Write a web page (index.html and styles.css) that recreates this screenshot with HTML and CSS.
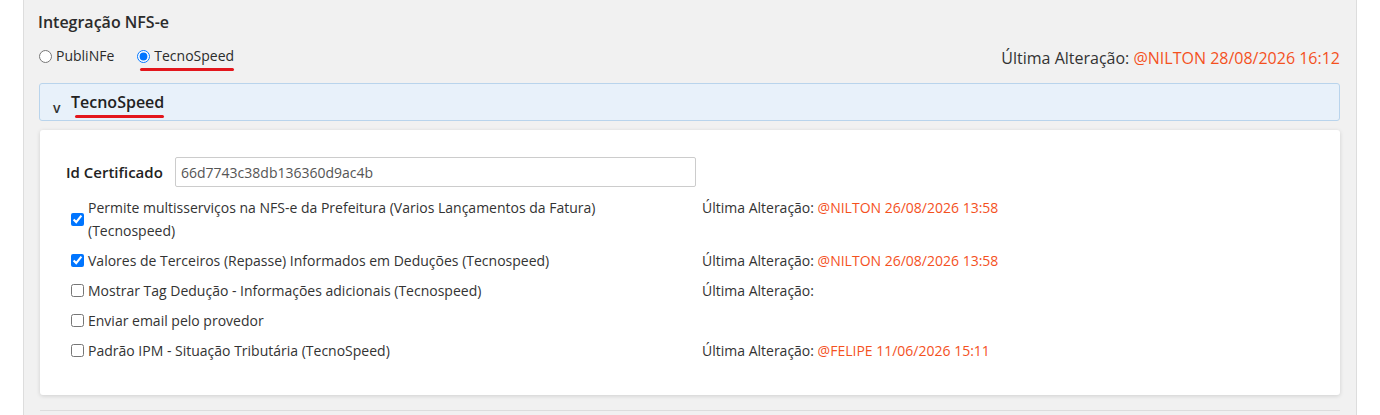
FILE: index.html
```html
<!DOCTYPE html>
<html lang="pt-BR">
<head>
<meta charset="utf-8">
<title>Integração NFS-e</title>
<link rel="stylesheet" href="styles.css">
</head>
<body>
<div class="page">
  <div class="section-title">Integração NFS-e</div>
  <div class="provider-row">
    <div class="radios">
      <label class="radio"><input type="radio" name="prov"> <span>PubliNFe</span></label>
      <label class="radio marked"><input type="radio" name="prov" checked> <span>TecnoSpeed</span></label>
    </div>
    <div class="last-change big">Última Alteração: <span class="who">@NILTON 28/08/2026 16:12</span></div>
  </div>

  <div class="acc-header">
    <span class="chev">v</span>
    <span class="acc-title marked">TecnoSpeed</span>
  </div>

  <div class="card">
    <div class="field">
      <label class="field-label" for="cert">Id Certificado</label>
      <input id="cert" class="text-input" type="text" value="66d7743c38db136360d9ac4b">
    </div>

    <div class="opts">
      <label class="chk"><input type="checkbox" checked><span>Permite multisserviços na NFS-e da Prefeitura (Varios Lançamentos da Fatura) (Tecnospeed)</span></label>
      <div class="last-change">Última Alteração: <span class="who">@NILTON 26/08/2026 13:58</span></div>

      <label class="chk"><input type="checkbox" checked><span>Valores de Terceiros (Repasse) Informados em Deduções (Tecnospeed)</span></label>
      <div class="last-change">Última Alteração: <span class="who">@NILTON 26/08/2026 13:58</span></div>

      <label class="chk"><input type="checkbox"><span>Mostrar Tag Dedução - Informações adicionais (Tecnospeed)</span></label>
      <div class="last-change">Última Alteração:</div>

      <label class="chk"><input type="checkbox"><span>Enviar email pelo provedor</span></label>
      <div class="last-change"></div>

      <label class="chk"><input type="checkbox"><span>Padrão IPM - Situação Tributária (TecnoSpeed)</span></label>
      <div class="last-change">Última Alteração: <span class="who">@FELIPE 11/06/2026 15:11</span></div>
    </div>
  </div>

  <div class="divider"></div>
</div>
</body>
</html>
```

FILE: styles.css
```css
* { box-sizing: border-box; }

html, body {
  margin: 0;
  padding: 0;
  background: #ffffff;
  font-family: "Open Sans", "Noto Sans", sans-serif;
  color: #333333;
  font-size: 14px;
}

.page {
  margin-left: 23px;
  width: 1334px;
  height: 415px;
  overflow: hidden;
  background: #f1f1f1;
  border-left: 1px solid #dddddd;
  border-right: 1px solid #dddddd;
  padding: 12px 16px 0 14px;
}

.section-title {
  font-size: 16px;
  font-weight: 600;
  line-height: 20px;
  color: #2b2b2b;
}

.provider-row {
  margin-top: 14px;
  margin-left: 1px;
  display: flex;
  justify-content: space-between;
  align-items: center;
  height: 20px;
}

.radios {
  display: flex;
  align-items: center;
  gap: 23px;
}

.radio {
  display: flex;
  align-items: center;
  gap: 2px;
  line-height: 20px;
  color: #2b2b2b;
}

.radio input {
  margin: 0 2px 0 0;
  width: 13px;
  height: 13px;
}

.marked {
  position: relative;
}

.radio.marked::after {
  content: "";
  position: absolute;
  left: 3px;
  right: 0;
  bottom: -5px;
  height: 3px;
  border-radius: 2px;
  background: #e3161c;
}

.last-change {
  line-height: 23px;
  color: #333333;
}

.last-change.big {
  font-size: 16px;
  margin-top: 4px;
}

.who {
  color: #f4511e;
}

.acc-header {
  margin-top: 17px;
  margin-left: 1px;
  height: 38px;
  background: #e8f1fa;
  border: 1px solid #b9d4ec;
  border-radius: 3px;
  padding-left: 13px;
  display: flex;
  align-items: center;
}

.chev {
  font-size: 14px;
  font-weight: 600;
  margin-top: 10px;
  width: 18px;
}

.acc-title {
  font-size: 16px;
  font-weight: 600;
  color: #222222;
  line-height: 22px;
}

.acc-title.marked::after {
  content: "";
  position: absolute;
  left: 4px;
  right: 0;
  bottom: -5px;
  height: 3px;
  border-radius: 2px;
  background: #e3161c;
}

.card {
  margin: 9px 0 0 2px;
  height: 265px;
  background: #ffffff;
  border-radius: 3px;
  box-shadow: 0 1px 4px rgba(0, 0, 0, 0.14);
  padding: 27px 15px 0 26px;
}

.field {
  display: flex;
  align-items: center;
  gap: 10px;
}

.field-label {
  font-size: 15px;
  font-weight: 600;
  color: #222222;
  width: 99px;
  white-space: nowrap;
}

.text-input {
  width: 521px;
  height: 30px;
  border: 1px solid #cccccc;
  border-radius: 2px;
  padding: 0 5px;
  font-family: inherit;
  font-size: 14px;
  color: #555555;
  outline: none;
}

.opts {
  margin-top: 9px;
  display: grid;
  grid-template-columns: 636px 1fr;
  row-gap: 7px;
  align-items: start;
}

.chk {
  display: flex;
  align-items: center;
  padding-left: 5px;
  padding-right: 18px;
  line-height: 23px;
}

.chk input {
  flex: none;
  width: 13px;
  height: 13px;
  margin: 0 4px 0 0;
}

.divider {
  margin: 15px 0 0 2px;
  border-top: 1px solid #dddddd;
}
```
